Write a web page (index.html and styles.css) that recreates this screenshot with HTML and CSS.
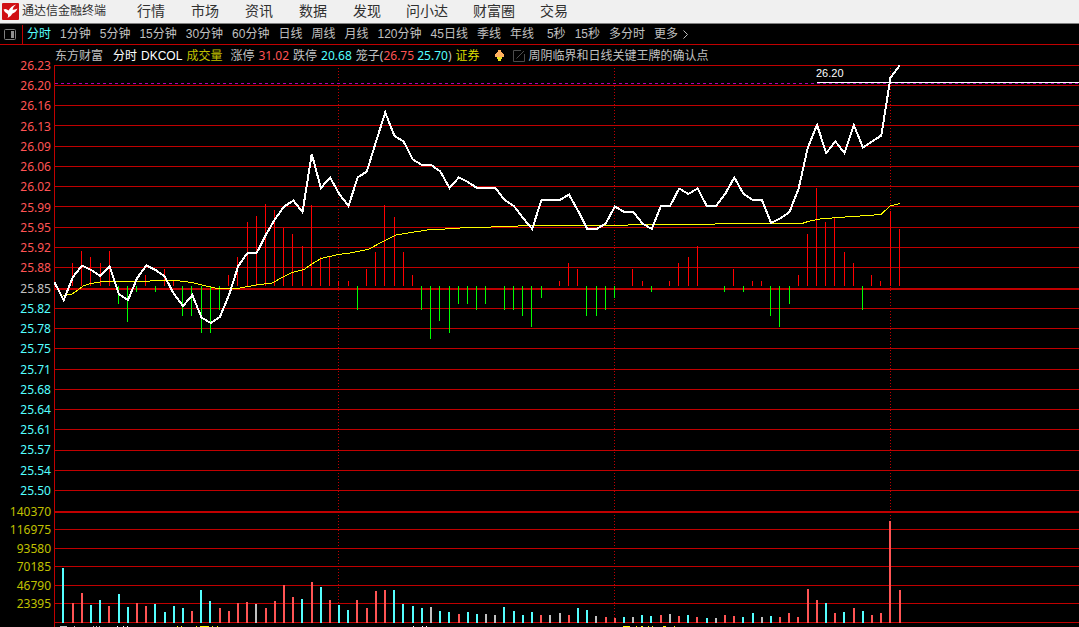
FILE: index.html
```html
<!DOCTYPE html>
<html lang="zh-CN">
<head>
<meta charset="utf-8">
<title>通达信金融终端</title>
<link rel="stylesheet" href="styles.css">
</head>
<body>
<header class="titlebar">
  <svg class="logo" width="17" height="17" viewBox="0 0 17 17" aria-hidden="true">
    <rect width="17" height="17" rx="1" fill="#d01014"/>
    <path d="M1.500 6.500Q4 5 6.500 7.500Q9 3 14 1.500Q11 4 10.500 6.500Q13 7 15.500 5.500Q14 9.500 10.500 10.500Q9 13.500 5.500 15Q7 12 5 10.500Q2.500 9.500 1.500 6.500z" fill="#fff"/>
  </svg>
  <h1 class="app-name">通达信金融终端</h1>
  <nav class="menu">
    <button>行情</button><button>市场</button><button>资讯</button><button>数据</button><button>发现</button>
  </nav>
  <nav class="menu menu-tools">
    <button>问小达</button><button>财富圈</button><button>交易</button>
  </nav>
</header>
<div class="periods">
  <button class="panel-toggle" aria-label="侧栏">
    <svg width="12" height="11" viewBox="0 0 12 11"><rect x=".5" y=".5" width="11" height="10" rx="1" fill="none" stroke="#808080"/><rect x="7" y="2" width="3" height="7" fill="#909090"/></svg>
  </button>
  <button class="active">分时</button>
  <button>1分钟</button><button>5分钟</button><button>15分钟</button><button>30分钟</button><button>60分钟</button>
  <button>日线</button><button>周线</button><button>月线</button><button>120分钟</button><button>45日线</button>
  <button>季线</button><button>年线</button><button class="seconds">5秒</button><button>15秒</button><button>多分时</button>
  <button class="more">更多<svg width="6" height="9" viewBox="0 0 6 9"><path d="M.5 .5 4.5 4.5 .5 8.5" fill="none" stroke="#c0c0c0"/></svg></button>
</div>
<div class="info">
  <span class="stock">东方财富</span>
  <span class="white">分时</span>
  <span class="white latin">DKCOL</span>
  <span class="olive volume-name">成交量</span>
  <span>涨停</span><span class="up">31.02</span>
  <span>跌停</span><span class="down">20.68</span>
  <span>笼子(<span class="up">26.75</span> <span class="down">25.70</span>)</span>
  <span class="yellow">证券</span>
  <svg class="marker" width="9" height="11" viewBox="0 0 9 11" aria-hidden="true"><path d="M3 0h3v2h1v1h1v1h1v3H0V4h1V3h1V2h1z" fill="#ffb060"/><path d="M2 7h5v2H6v2H3V9H2z" fill="#e8e020"/></svg>
  <svg class="note" width="12" height="12" viewBox="0 0 12 12" aria-hidden="true"><path d="M8 .5H.5v11h11V4M3.500 8.500 11 1" fill="none" stroke="#4c4c4c"/></svg>
  <span>周阴临界和日线关键王牌的确认点</span>
</div>
<main class="board">
  <div class="axis">
    <ol class="price-axis">
      <li class="up">26.23</li><li class="up">26.20</li><li class="up">26.16</li><li class="up">26.13</li><li class="up">26.09</li><li class="up">26.06</li><li class="up">26.02</li><li class="up">25.99</li><li class="up">25.95</li><li class="up">25.92</li><li class="up">25.88</li><li>25.85</li>
      <li class="down">25.82</li><li class="down">25.78</li><li class="down">25.75</li><li class="down">25.71</li><li class="down">25.68</li><li class="down">25.64</li><li class="down">25.61</li><li class="down">25.57</li><li class="down">25.54</li><li class="down">25.50</li>
    </ol>
    <ol class="volume-axis olive">
      <li>140370</li><li>116975</li><li>93580</li><li>70185</li><li>46790</li><li>23395</li>
    </ol>
  </div>
  <svg class="chart" id="chart" role="img" aria-label="东方财富 分时">
    <text x="762" y="12" class="mark">26.20</text>
  </svg>
</main>
<script src="chart.js"></script>
</body>
</html>
```
FILE: styles.css
```css
* { box-sizing: border-box; }

body {
  margin: 0;
  background: #000;
  color: #c0c0c0;
  font: 12px/18px "Noto Sans", "Noto Sans CJK SC", sans-serif;
  overflow: hidden;
}

button {
  padding: 0;
  border: 0;
  background: none;
  color: inherit;
  font: inherit;
  white-space: nowrap;
}

.titlebar {
  display: flex;
  align-items: center;
  height: 24px;
  padding: 0 2px 1px;
  background: #f0f0f0;
  border-bottom: 1px solid #808080;
  color: #303030;
}

.app-name {
  margin: 0 31px 0 3px;
  font-size: 12px;
  font-weight: 400;
}

.menu {
  display: flex;
  gap: 26px;
  font-size: 14px;
}

.menu-tools {
  gap: 25px;
  margin-left: 25px;
}

.periods {
  display: flex;
  align-items: center;
  gap: 9px;
  height: 21px;
  border-bottom: 1px solid #c00000;
  font-family: "Liberation Sans", "Noto Sans CJK SC", sans-serif;
  white-space: nowrap;
}

.panel-toggle {
  display: flex;
  align-items: center;
  align-self: stretch;
  width: 23px;
  margin: 1px -5px 0 0;
  padding-left: 4px;
  border-right: 1px solid #c00000;
}

.seconds { margin-left: 4px; }

.more {
  display: flex;
  align-items: center;
  gap: 5px;
}

.info {
  display: flex;
  align-items: center;
  gap: 4px;
  height: 20px;
  padding: 1px 0 0 55px;
  white-space: nowrap;
}

.stock { margin-right: 6px; }
.volume-name { margin-right: 4px; }
.latin { font-family: "Liberation Sans", sans-serif; }
.marker { margin: 0 5px 0 11px; }

.active, .down { color: #54ffff; }
.up { color: #ff5454; }
.white { color: #fff; }
.olive { color: #c0c000; }
.yellow { color: #dcdc00; }

.board {
  display: grid;
  grid-template-columns: 54px 1fr;
}

.axis {
  margin-top: -8px;
  padding-right: 3px;
  text-align: right;
}

.axis ol {
  display: flex;
  flex-direction: column;
  justify-content: space-between;
  margin: 0;
  padding: 0;
  list-style: none;
}

.price-axis { height: 443px; }

.axis .volume-axis {
  height: 110px;
  margin-top: 3px;
}

.chart {
  display: block;
  width: 100%;
  height: 562px;
  shape-rendering: crispEdges;
}

.mark {
  fill: #fff;
  font: 11px "Liberation Sans", sans-serif;
}
```
FILE: chart.js
```js
const svg = document.getElementById("chart");
const label = svg.querySelector("text");
const LEFT = 54;
const TOP = 65;
const SLOT = 9.187;

function add(tag, attrs) {
  const el = document.createElementNS("http://www.w3.org/2000/svg", tag);
  for (const key in attrs) el.setAttribute(key, attrs[key]);
  svg.insertBefore(el, label);
}

function rect(x, y, width, height, fill) {
  add("rect", { x: x - LEFT, y: y - TOP, width, height, fill });
}

function polyline(points, stroke, width) {
  add("polyline", {
    points: points.map(([x, y]) => (x - LEFT) + "," + (y - TOP)).join(" "),
    fill: "none", stroke, "stroke-width": width
  });
}

// grid
const rows = [65, 85, 105, 125, 146, 166, 186, 206, 227, 247, 267, 288, 308, 328, 348, 369, 389, 409, 429, 450, 470, 490, 511, 529, 548, 566, 585, 603, 622];
for (const y of rows) rect(LEFT, y, "100%", y === 288 || y === 511 ? 2 : 1, "#c00000");
rect(LEFT, 65, 1, 562, "#c00000");
for (const x of [338, 614, 890]) {
  add("line", { x1: x - LEFT + 0.5, x2: x - LEFT + 0.5, y1: 3, y2: 558, stroke: "#c00000", "stroke-dasharray": "1 2" });
}
add("line", { x1: 1, x2: "100%", y1: 18.5, y2: 18.5, stroke: "#b000b0", "stroke-dasharray": "3 3" });

// momentum tips by slot, 0 where there is no bar
const momentum = [0, 0, 263, 251, 257, 263, 251, 304, 322, 292, 275, 292, 269, 281, 316, 316, 333, 333, 310, 275, 257,
  222, 216, 204, 210, 228, 234, 246, 205, 257, 257, 281, 281, 310, 269, 252, 205, 217, 252, 275, 310,
  339, 321, 333, 304, 304, 310, 304, 0, 310, 310, 316, 327, 298, 0, 281, 263, 269, 316, 316, 310,
  298, 0, 269, 281, 292, 0, 281, 263, 257, 246, 0, 0, 292, 269, 292, 281, 281, 316, 327, 304,
  275, 234, 188, 222, 217, 252, 263, 310, 275, 281, 211, 229];
momentum.forEach((y, k) => {
  if (!y) return;
  const x = Math.floor(LEFT + 0.1 + SLOT * k);
  if (y < 286) rect(x, y, 1, 286 - y, "#ff0000");
  else rect(x, 286, 1, y - 286, "#00ff00");
});

// volume: colour letter and bar top
const colours = { r: "#ff5454", c: "#54ffff", g: "#c0c0c0" };
const volume = ("c568 r603 r593 c605 c600 r606 c594 c607 r603 r606 c604 c612 c606 c608 r611 c590 c601 r608 r611 r603 " +
  "r602 g604 r608 r601 r585 r597 c599 r582 c587 r600 c605 c610 r600 r608 r591 r590 c590 c604 c606 c608 " +
  "g607 c611 c612 r614 c612 c614 g614 g615 c607 c611 c615 c612 r615 g615 g613 r615 c608 c610 g616 r617 " +
  "r618 c617 g617 c615 c616 r615 g614 r616 c615 r617 c618 g618 r615 r616 c617 c613 g617 c616 r617 r613 " +
  "r617 r589 r600 c603 r613 c612 r608 c611 r615 r613 r521 r590").split(" ");
volume.forEach((bar, i) => {
  const y = Number(bar.slice(1));
  rect(Math.floor(LEFT - 0.2 + SLOT * (i + 1)), y, 2, 623 - y, colours[bar[0]]);
});

// average price
polyline([[63, 295.5], [72, 294], [78, 290], [84, 285.5], [91, 283.5], [100, 282], [110, 281], [124, 281.5], [142, 282], [150, 281], [164, 280], [180, 281], [192, 282.5], [202, 285], [215, 288], [240, 288], [256, 285], [272, 283], [283, 277], [292, 272.5], [304, 269.5], [312, 264], [321, 258.5], [338, 254.5], [350, 253], [368, 249.5], [384, 241], [396, 235], [408, 233], [427, 230], [445, 229], [460, 228], [478, 227.5], [491, 227], [500, 226.5], [536, 225.5], [600, 225.5], [656, 224.5], [700, 224.5], [731, 223.5], [802, 223.5], [808, 221.5], [820, 219], [838, 217.5], [860, 216], [881, 214.5], [890, 206], [900, 203.5]], "#ffff00", 1);

// last price
const price = [282.5, 300, 277, 265.5, 270, 276, 266, 294, 300, 278, 265.5, 270, 276.5, 294, 306, 295, 317.5, 323, 317, 295, 266,
  253, 253, 235, 219, 206.5, 200.5, 212, 154, 188, 177.5, 194, 206, 177.5, 171.5, 141.5, 112.5, 136, 141.5, 159.5, 165,
  165, 171.5, 188, 177.5, 182, 188, 188, 188, 200, 206, 218, 229, 200, 200, 200, 194.5, 211, 229, 229, 223.5,
  206.5, 212, 212, 223.5, 229, 206, 206, 188.5, 194, 188.5, 206, 206, 194, 177.5, 194, 200, 200, 223, 218.5, 212,
  188.5, 147.5, 125, 153, 141.5, 153, 125, 147.5, 141.5, 135.5, 77.5, 65.5];
polyline(price.map((y, k) => [LEFT + SLOT * k + 0.5, y]), "#ffffff", 2);
rect(817, 82, "100%", 1, "#ffffff");

// top edge of the next pane
const edge = {
  "#c0c0c0": [[60, 7], [74, 1], [93, 1], [96, 1], [99, 1]],
  "#ffffff": [[117, 1], [123, 1], [127, 1], [413, 1], [422, 1], [426, 1]],
  "#ffff00": [[177, 1], [181, 1], [196, 1], [200, 9], [212, 1], [217, 1], [623, 7], [636, 1], [641, 2], [648, 1], [652, 1], [663, 3], [674, 1]]
};
for (const fill in edge) for (const [x, w] of edge[fill]) rect(x, 626, w, 1, fill);
```
